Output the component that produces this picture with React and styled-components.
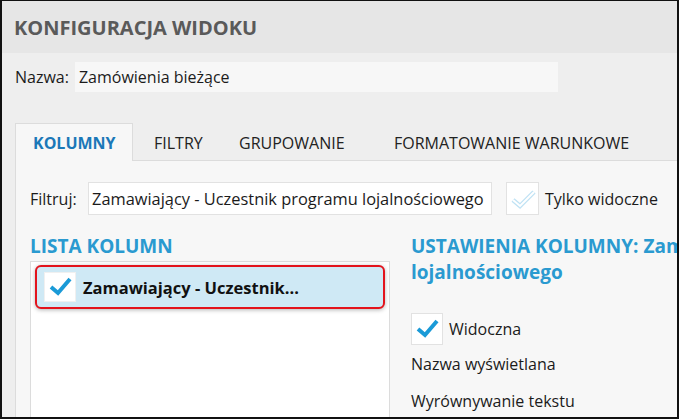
import React from 'react';
import styled, { createGlobalStyle } from 'styled-components';

const GlobalStyle = createGlobalStyle`
  html, body {
    margin: 0;
    padding: 0;
    background: #000;
  }
  * { box-sizing: border-box; }
`;

const Frame = styled.div`
  width: 679px;
  height: 419px;
  overflow: hidden;
  display: flex;
  flex-direction: column;
  border-top: 1px solid #111;
  border-left: 2px solid #111;
  border-right: 2px solid #111;
  border-bottom: 2px solid #111;
  background: #eeeeee;
  font-family: "Open Sans", "Noto Sans", sans-serif;
  font-size: 16px;
  color: #1b1b1b;
`;

const Header = styled.div`
  height: 52px;
  flex: none;
  display: flex;
  align-items: center;
  padding-left: 12px;
  background: #e6e6e6;
`;

const Title = styled.div`
  font-size: 20px;
  font-weight: 700;
  color: #5a5a5a;
`;

const Body = styled.div`
  flex: 1;
  display: flex;
  flex-direction: column;
  padding: 9px 0 0 13px;
  min-height: 0;
`;

const NameRow = styled.div`
  display: flex;
  align-items: center;
  gap: 6px;
`;

const NameInput = styled.div`
  width: 483px;
  height: 30px;
  display: flex;
  align-items: center;
  padding-left: 4px;
  background: #f7f7f7;
`;

const Tabs = styled.div`
  display: flex;
  margin-top: 31px;
`;

const Tab = styled.div`
  width: ${p => p.$w}px;
  height: 38px;
  display: flex;
  align-items: center;
  padding-left: ${p => (p.$active ? 17 : 20)}px;
  font-weight: ${p => (p.$active ? 700 : 400)};
  color: ${p => (p.$active ? '#1b78b8' : '#222')};
  background: ${p => (p.$active ? '#f7f7f7' : 'transparent')};
  border: 1px solid ${p => (p.$active ? '#dcdcdc' : 'transparent')};
  border-bottom: none;
  margin-bottom: -1px;
  position: relative;
  white-space: nowrap;
`;

const Panel = styled.div`
  flex: 1;
  background: #f7f7f7;
  border-top: 1px solid #dcdcdc;
  border-left: 1px solid #dcdcdc;
  padding: 21px 0 0 14px;
  display: flex;
  flex-direction: column;
  min-height: 0;
`;

const FilterRow = styled.div`
  display: flex;
  align-items: center;
`;

const FilterLabel = styled.span`
  width: 58px;
`;

const FilterInput = styled.div`
  width: 404px;
  height: 33px;
  display: flex;
  align-items: center;
  padding-left: 3px;
  background: #fff;
  border: 1px solid #e2e2e2;
  white-space: nowrap;
  overflow: hidden;
  font-size: 16.4px;
`;

const Box = styled.div`
  width: ${p => p.$w || 33}px;
  height: ${p => p.$h || 33}px;
  flex: none;
  display: flex;
  align-items: center;
  justify-content: center;
  margin-left: ${p => p.$ml || 0}px;
  background: #fff;
  border: 1px solid ${p => p.$border || '#e2e2e2'};
`;

const CheckLabel = styled.span`
  margin-left: 6px;
`;

const Columns = styled.div`
  flex: 1;
  display: flex;
  gap: 21px;
  margin-top: 18px;
  min-height: 0;
`;

const LeftCol = styled.div`
  width: 360px;
  flex: none;
  display: flex;
  flex-direction: column;
`;

const RightCol = styled.div`
  flex: 1;
  display: flex;
  flex-direction: column;
  min-width: 0;
`;

const Heading = styled.div`
  font-size: 19px;
  font-weight: 700;
  color: #2a9ad0;
  line-height: 26px;
  white-space: nowrap;
`;

const ListBox = styled.div`
  flex: 1;
  margin-top: 2px;
  background: #fff;
  border: 1px solid #dcdcdc;
  border-bottom: none;
  padding: 3px 4px;
`;

const ListItem = styled.div`
  height: 44px;
  display: flex;
  align-items: center;
  padding-left: 7px;
  background: #cfe9f5;
  border: 2px solid #e3131c;
  border-radius: 6px;
  box-shadow: 0 1px 4px rgba(0, 0, 0, 0.3);
  font-size: 16.5px;
  font-weight: 700;
  color: #111;
`;

const ItemText = styled.span`
  margin-left: 7px;
`;

const OptionRow = styled.div`
  display: flex;
  align-items: center;
  margin-top: ${p => p.$mt || 0}px;
  line-height: 22px;
`;

const Check = ({ size = 26 }) => (
  <svg width={size} height={size} viewBox="0 0 26 26">
    <polyline points="4,13 11,19 23,5" fill="none" stroke="#1a9ad7" strokeWidth="4" strokeLinejoin="miter" />
  </svg>
);

const LightCheck = () => (
  <svg width="28" height="28" viewBox="0 0 28 28">
    <polyline points="4,15 11,21 25,7" fill="none" stroke="#bfe2f4" strokeWidth="4.5" />
    <polyline points="4,15 11,21 25,7" fill="none" stroke="#ffffff" strokeWidth="2" />
  </svg>
);

const tabs = [
  { label: 'KOLUMNY', w: 118, active: true },
  { label: 'FILTRY', w: 85 },
  { label: 'GRUPOWANIE', w: 155 },
  { label: 'FORMATOWANIE WARUNKOWE', w: 270 },
];

const App = () => (
  <>
    <GlobalStyle />
    <Frame>
      <Header>
        <Title>KONFIGURACJA WIDOKU</Title>
      </Header>
      <Body>
        <NameRow>
          <span>Nazwa:</span>
          <NameInput>Zamówienia bieżące</NameInput>
        </NameRow>
        <Tabs>
          {tabs.map(t => (
            <Tab key={t.label} $w={t.w} $active={t.active}>{t.label}</Tab>
          ))}
        </Tabs>
        <Panel>
          <FilterRow>
            <FilterLabel>Filtruj:</FilterLabel>
            <FilterInput>Zamawiający - Uczestnik programu lojalnościowego</FilterInput>
            <Box $ml={14}>
              <LightCheck />
            </Box>
            <CheckLabel>Tylko widoczne</CheckLabel>
          </FilterRow>
          <Columns>
            <LeftCol>
              <Heading>LISTA KOLUMN</Heading>
              <ListBox>
                <ListItem>
                  <Box $w={32} $h={30} $border="#f0f0f0">
                    <Check />
                  </Box>
                  <ItemText>Zamawiający - Uczestnik...</ItemText>
                </ListItem>
              </ListBox>
            </LeftCol>
            <RightCol>
              <Heading>
                USTAWIENIA KOLUMNY: Zamawiający - Uczestnik programu
                <br />
                lojalnościowego
              </Heading>
              <OptionRow $mt={28}>
                <Box $w={32} $h={32}>
                  <Check />
                </Box>
                <CheckLabel>Widoczna</CheckLabel>
              </OptionRow>
              <OptionRow $mt={8}>Nazwa wyświetlana</OptionRow>
              <OptionRow $mt={15}>Wyrównywanie tekstu</OptionRow>
            </RightCol>
          </Columns>
        </Panel>
      </Body>
    </Frame>
  </>
);

export default App;
